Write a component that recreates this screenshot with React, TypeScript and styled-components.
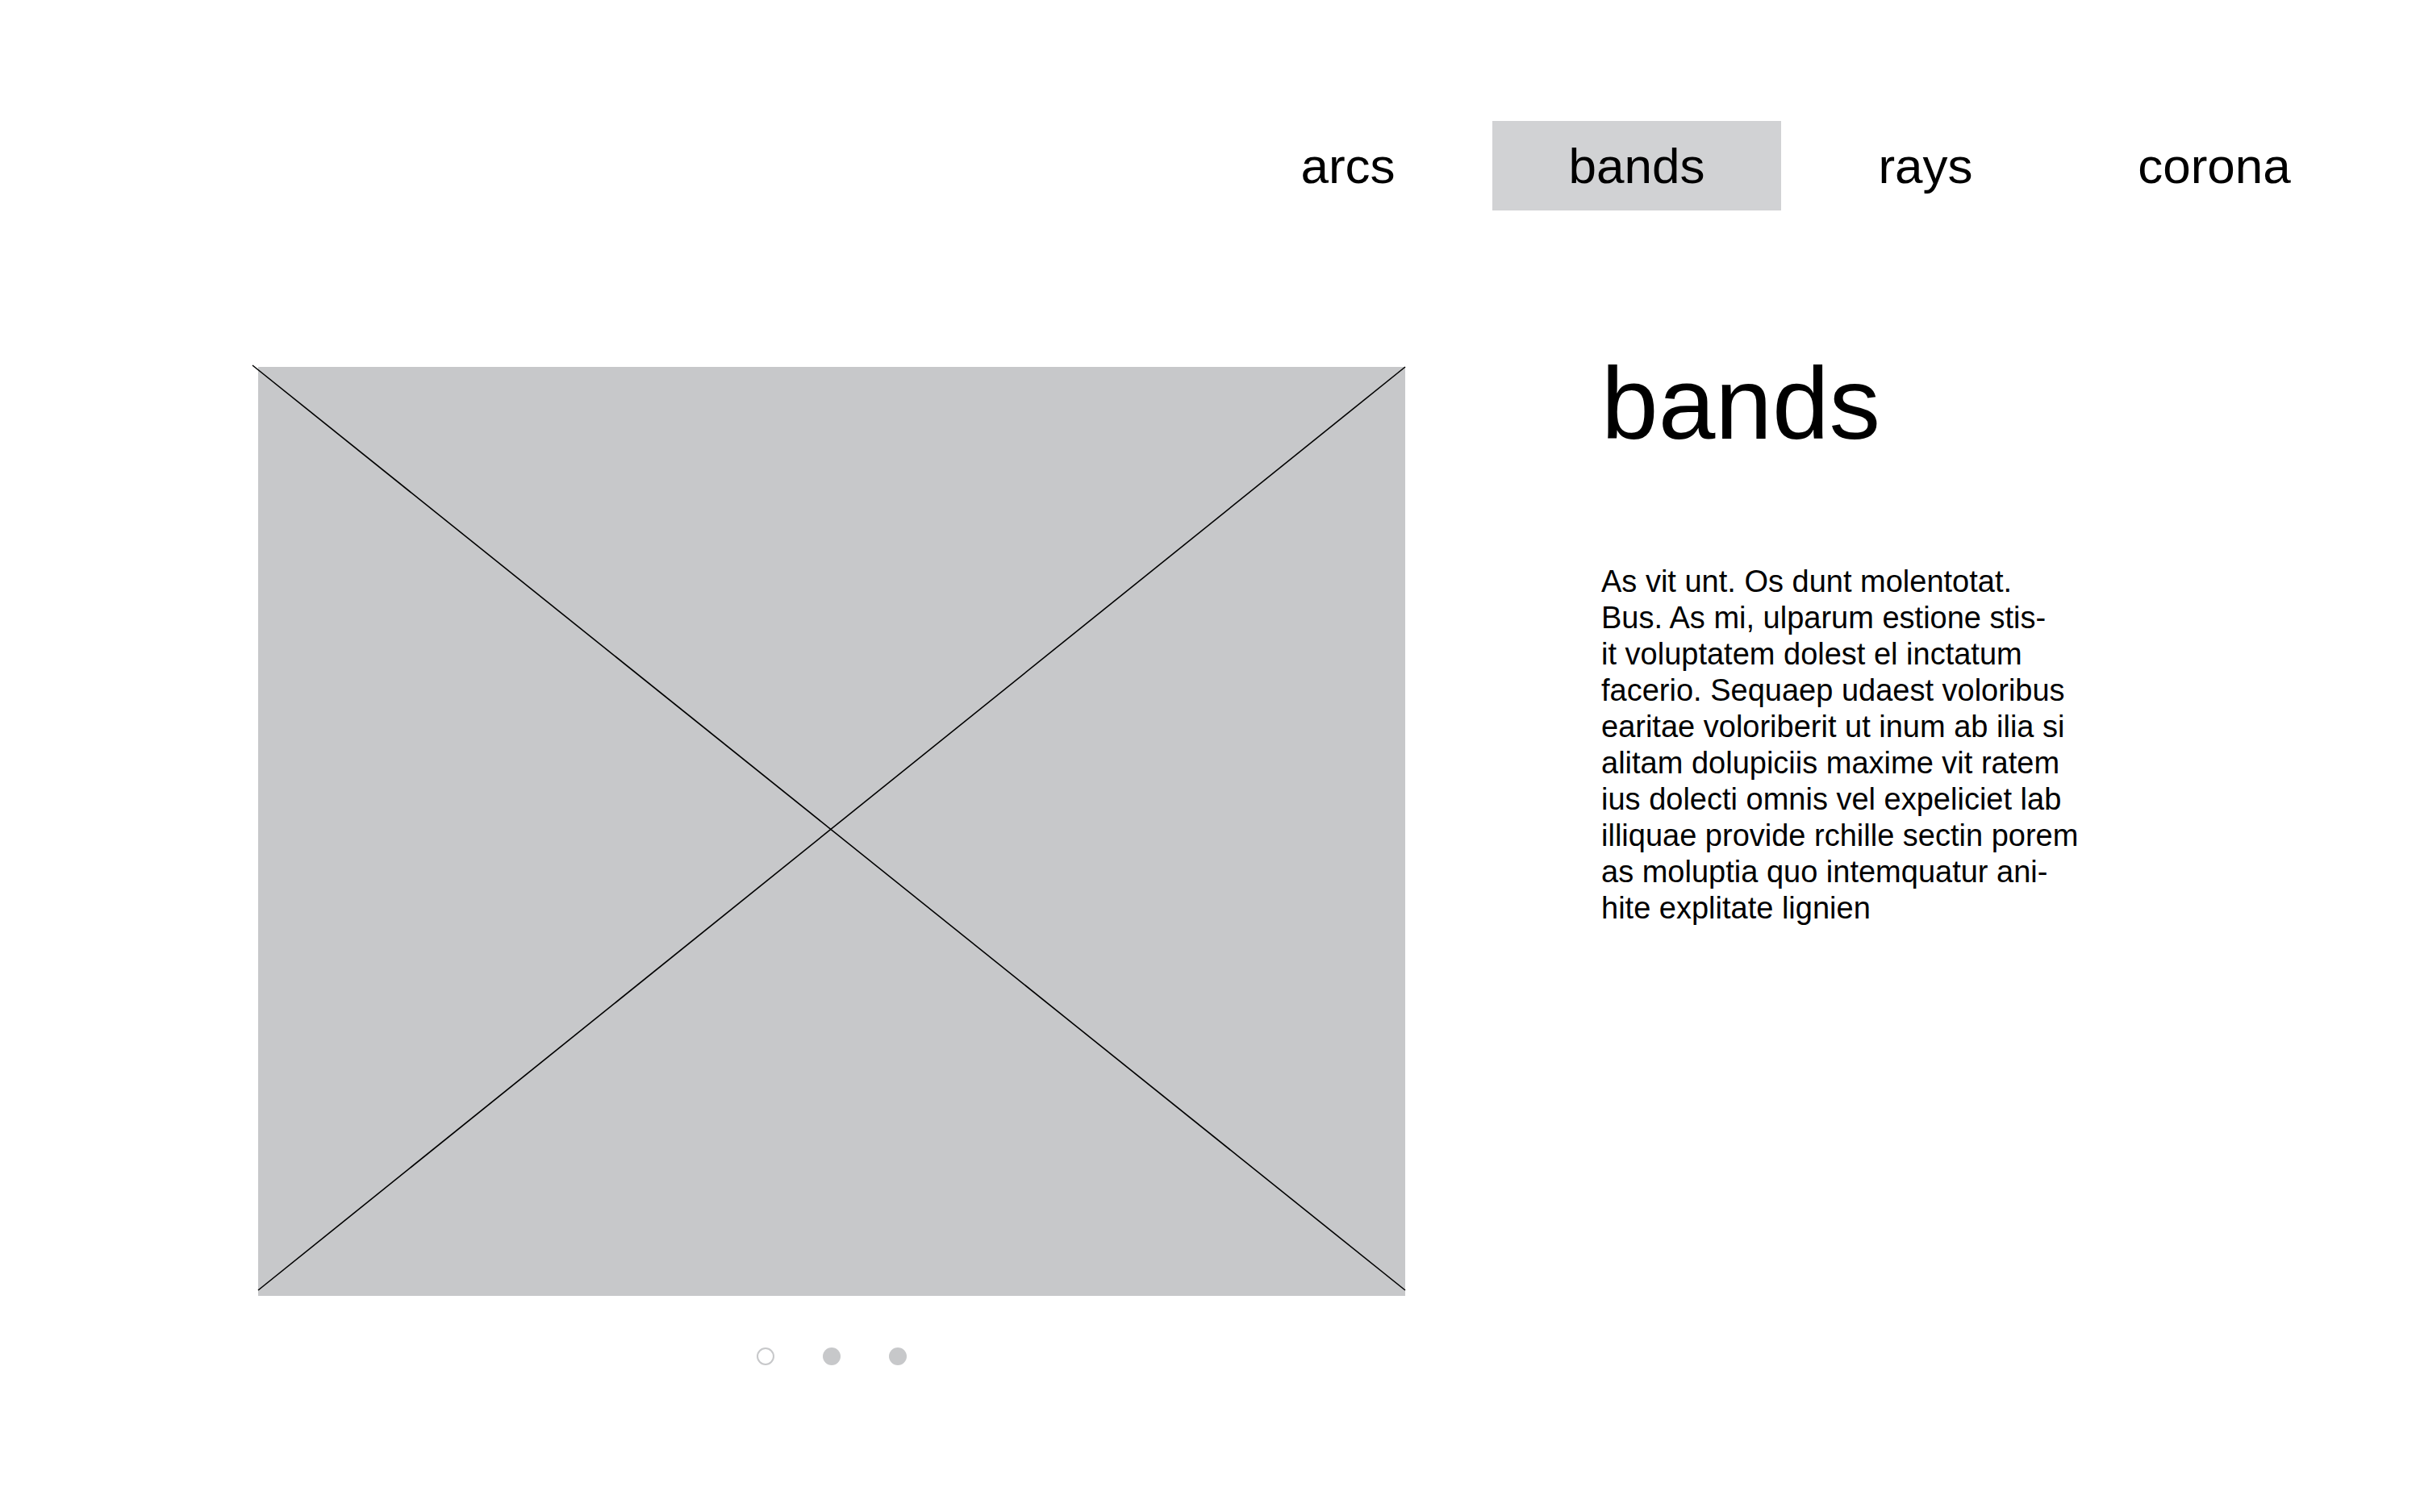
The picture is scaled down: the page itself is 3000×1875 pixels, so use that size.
import React from "react";
import styled, { createGlobalStyle } from "styled-components";

const Global = createGlobalStyle`
  html, body {
    margin: 0;
    padding: 0;
    background: #ffffff;
  }
  body {
    font-family: "Liberation Sans", Arial, Helvetica, sans-serif;
    color: #000;
  }
`;

const Page = styled.div`
  width: 3000px;
  min-height: 1875px;
  box-sizing: border-box;
  padding-top: 150px;
  background: #fff;
`;

const Nav = styled.nav`
  display: flex;
  justify-content: flex-end;
  padding-right: 76px;
`;

const Tab = styled.a<{ $active?: boolean }>`
  display: block;
  width: 358px;
  height: 111px;
  line-height: 111px;
  text-align: center;
  font-size: 62px;
  color: #000;
  text-decoration: none;
  background: ${(p) => (p.$active ? "#d1d2d4" : "transparent")};
`;

const Main = styled.main`
  display: flex;
  align-items: flex-start;
  gap: 243px;
  padding-left: 320px;
  margin-top: 177px;
`;

const Gallery = styled.section`
  display: flex;
  flex-direction: column;
  align-items: center;
  padding-top: 17px;
`;

const Placeholder = styled.div`
  position: relative;
  width: 1422px;
  height: 1152px;
  background: #c7c8ca;
`;

const Cross = styled.svg`
  position: absolute;
  left: 0;
  top: 0;
  overflow: visible;
`;

const Dots = styled.div`
  display: flex;
  gap: 60px;
  margin-top: 64px;
`;

const Dot = styled.span<{ $current?: boolean }>`
  display: block;
  width: 22px;
  height: 22px;
  box-sizing: border-box;
  border-radius: 50%;
  background: ${(p) => (p.$current ? "#fff" : "#c7c8ca")};
  border: ${(p) => (p.$current ? "2px solid #c7c8ca" : "none")};
`;

const Info = styled.section`
  display: flex;
  flex-direction: column;
`;

const Heading = styled.h1`
  margin: 0;
  font-weight: 400;
  font-size: 127px;
  line-height: 124px;
`;

const Body = styled.p`
  margin: 137px 0 0;
  font-size: 38px;
  line-height: 45px;
  white-space: nowrap;
`;

const Line = styled.span`
  display: block;
`;

const tabs = ["arcs", "bands", "rays", "corona"];

const lines = [
  "As vit unt. Os dunt molentotat.",
  "Bus. As mi, ulparum estione stis-",
  "it voluptatem dolest el inctatum",
  "facerio. Sequaep udaest voloribus",
  "earitae voloriberit ut inum ab ilia si",
  "alitam dolupiciis maxime vit ratem",
  "ius dolecti omnis vel expeliciet lab",
  "illiquae provide rchille sectin porem",
  "as moluptia quo intemquatur ani-",
  "hite explitate lignien",
];

export default function App() {
  return (
    <>
      <Global />
      <Page>
        <Nav>
          {tabs.map((t) => (
            <Tab key={t} href="#" $active={t === "bands"}>
              {t}
            </Tab>
          ))}
        </Nav>
        <Main>
          <Gallery>
            <Placeholder>
              <Cross width="1422" height="1152" viewBox="0 0 1422 1152">
                <line x1="-7" y1="-2" x2="1422" y2="1145" stroke="#000" strokeWidth="1.6" />
                <line x1="1422" y1="0" x2="0" y2="1145" stroke="#000" strokeWidth="1.6" />
              </Cross>
            </Placeholder>
            <Dots>
              <Dot $current />
              <Dot />
              <Dot />
            </Dots>
          </Gallery>
          <Info>
            <Heading>bands</Heading>
            <Body>
              {lines.map((l, i) => (
                <Line key={i}>{l}</Line>
              ))}
            </Body>
          </Info>
        </Main>
      </Page>
    </>
  );
}
